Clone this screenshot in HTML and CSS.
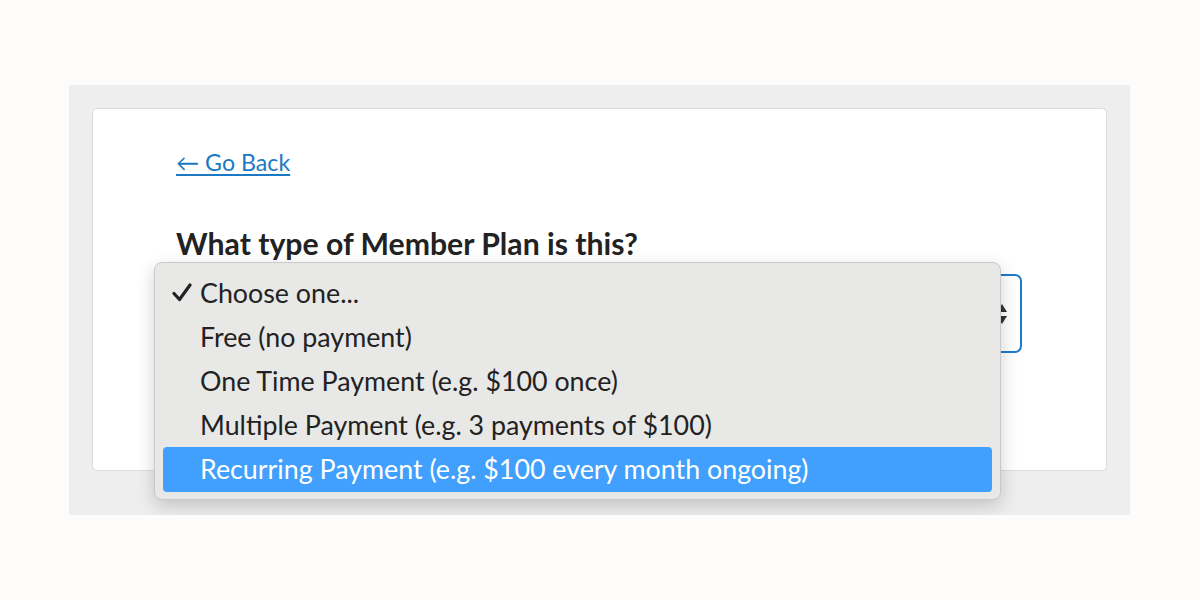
FILE: index.html
```html
<!DOCTYPE html>
<html>
<head>
<meta charset="utf-8">
<link rel="stylesheet" href="styles.css">
</head>
<body>
<div class="panel">
  <div class="card">
    <a class="back" href="#">← Go Back</a>
    <h2 class="question">What type of Member Plan is this?</h2>
    <div class="field">
      <div class="select">
        <span class="arrows">
          <svg width="12" height="22" viewBox="0 0 12 22"><path d="M6 1 L11 9 L1 9 Z M6 21 L11 13 L1 13 Z" fill="#333"/></svg>
        </span>
      </div>
      <ul class="menu">
        <li class="opt checked"><svg class="check" width="20" height="19" viewBox="0 0 20 19"><path d="M2 10.5 L7.5 16.5 L18 2" fill="none" stroke="#222" stroke-width="3.2" stroke-linecap="round" stroke-linejoin="round"/></svg>Choose one...</li>
        <li class="opt">Free (no payment)</li>
        <li class="opt">One Time Payment (e.g. $100 once)</li>
        <li class="opt">Multiple Payment (e.g. 3 payments of $100)</li>
        <li class="opt active">Recurring Payment (e.g. $100 every month ongoing)</li>
      </ul>
    </div>
  </div>
</div>
</body>
</html>
```
FILE: styles.css
```css
* { box-sizing: border-box; }
body {
  margin: 0;
  background: #fdfcfb;
  font-family: Lato, "Open Sans", sans-serif;
  color: #222;
}
.panel {
  margin: 85px 0 0 69px;
  width: 1061px;
  height: 430px;
  background: #eeeeee;
  padding: 23px;
}
.card {
  background: #fff;
  border: 1px solid #dcdcdc;
  border-radius: 5px;
  height: 363px;
  padding: 38px 0 0 83px;
}
.back {
  display: inline-block;
  font-size: 23.2px;
  line-height: 30px;
  color: #1b79c4;
  text-decoration: underline;
  text-underline-offset: 3px;
  text-decoration-thickness: 1.5px;
}
.question {
  margin: 48px 0 0 0;
  font-size: 30.2px;
  line-height: 36px;
  font-weight: 700;
  color: #222;
}
.field {
  position: relative;
  margin-top: 13px;
}
.select {
  width: 846px;
  height: 79px;
  border: 2px solid #1b7bcc;
  border-radius: 7px;
  background: #fff;
  display: flex;
  justify-content: flex-end;
  align-items: center;
  padding-right: 12px;
}
.arrows { display: flex; }
.menu {
  position: absolute;
  left: -22px;
  top: -12px;
  width: 847px;
  margin: 0;
  padding: 8px 8px 7px 8px;
  list-style: none;
  background: #e8e8e7;
  border: 1px solid #c9c9c9;
  border-radius: 8px;
  box-shadow: 0 6px 18px rgba(0,0,0,0.18);
}
.opt {
  position: relative;
  height: 44px;
  line-height: 44px;
  padding-left: 37px;
  font-size: 26.8px;
  color: #222;
  border-radius: 4px;
  white-space: nowrap;
}
.check {
  position: absolute;
  left: 9px;
  top: 12px;
}
.active {
  background: #41a0fd;
  color: #fff;
  height: 45px;
}
```
